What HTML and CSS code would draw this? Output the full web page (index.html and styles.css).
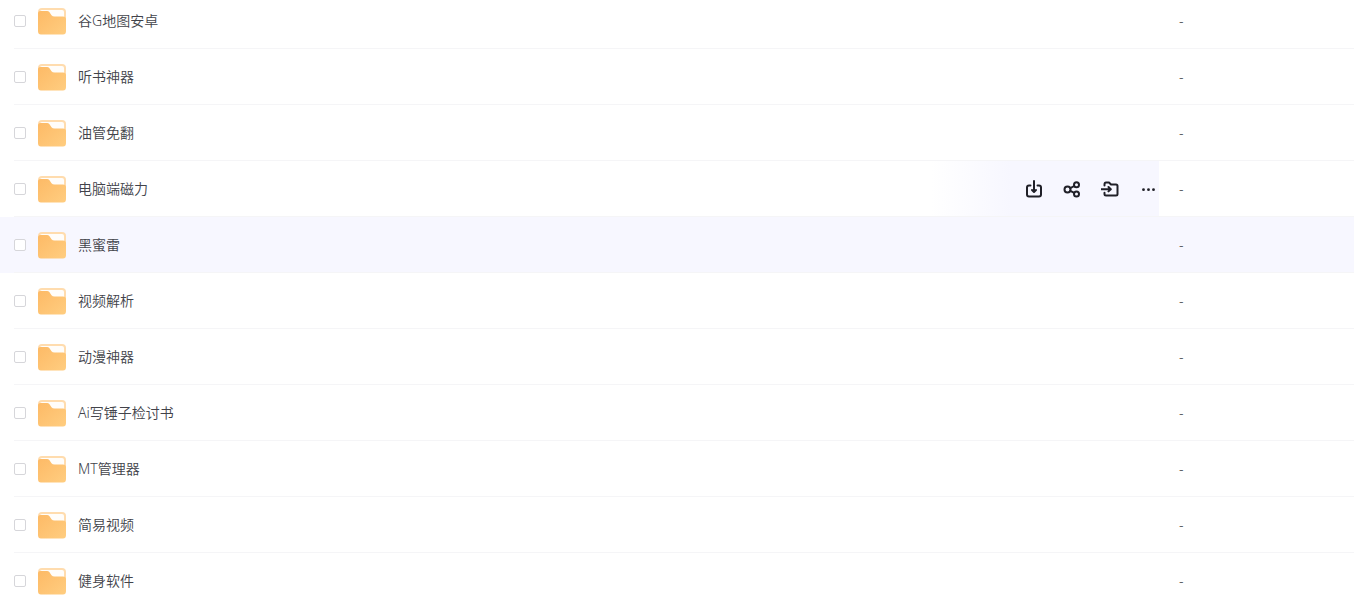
FILE: index.html
```
<!DOCTYPE html>
<html lang="zh-CN">
  <head>
    <meta charset="UTF-8" />
    <meta name="viewport" content="width=device-width, initial-scale=1.0" />
    <title>文件列表</title>
    <link rel="stylesheet" href="styles.css">
  </head>
  <body>
    <table class="file-list">
      <tbody id="fileRows"></tbody>
    </table>

    <svg class="symbols" aria-hidden="true">
      <defs>
        <linearGradient id="folderFront" x1="0" y1="0" x2="1" y2="1">
          <stop offset="0" stop-color="#fdba66" />
          <stop offset="1" stop-color="#ffcd80" />
        </linearGradient>
      </defs>
      <symbol id="folder" viewBox="0 0 30 28">
        <rect x="1" y="1" width="28" height="25" rx="4" fill="#ffdcae" />
        <rect x="3" y="3" width="24" height="14" rx="2" fill="#fffdfa" />
        <path d="M1 6.5Q1 4 3.5 4H10Q11.500 4 12.500 5.200L14.500 8.200Q15.500 9.500 17.500 9.500H26Q29 9.500 29 12V24Q29 27.500 26 27.500H4Q1 27.500 1 24Z" fill="url(#folderFront)" />
      </symbol>
    </svg>

    <template id="actions">
      <div class="actions">
        <button type="button" aria-label="下载">
          <svg viewBox="0 0 18 18">
            <path d="M5.500 5.500H4Q2 5.500 2 7.500V14.500Q2 16.500 4 16.500H14Q16 16.500 16 14.500V7.500Q16 5.500 14 5.500H12.500" />
            <path d="M9 1V11.500M7 10L9 12L11 10" />
          </svg>
        </button>
        <button type="button" aria-label="分享">
          <svg viewBox="0 0 18 18">
            <circle cx="4.500" cy="9.500" r="3" />
            <circle cx="13.500" cy="4.800" r="2.500" />
            <circle cx="13.500" cy="14" r="2.500" />
            <path d="M7.300 8.200L11.200 6M7.300 10.800L11.200 12.800" />
          </svg>
        </button>
        <button type="button" aria-label="移动">
          <svg viewBox="0 0 18 18">
            <path d="M3.500 5.500V4.500Q3.500 2.500 5 2.500H8L10 4.500H15Q16.500 4.500 16.500 6V14Q16.500 15.500 15 15.500H5Q3.500 15.500 3.500 14V12.800" />
            <path d="M0 9.200H9.500M7.500 7L9.800 9.200L7.500 11.400" />
          </svg>
        </button>
        <button type="button" aria-label="更多">
          <svg class="dots" viewBox="0 0 18 18">
            <circle cx="4.500" cy="9.700" r="1.400" />
            <circle cx="9.500" cy="9.700" r="1.400" />
            <circle cx="14.500" cy="9.700" r="1.400" />
          </svg>
        </button>
      </div>
    </template>

    <script>
      const files = [
        { name: "谷G地图安卓" },
        { name: "听书神器" },
        { name: "油管免翻" },
        { name: "电脑端磁力", actions: true },
        { name: "黑蜜雷", active: true },
        { name: "视频解析" },
        { name: "动漫神器" },
        { name: "Ai写锤子检讨书" },
        { name: "MT管理器" },
        { name: "简易视频" },
        { name: "健身软件" },
      ];

      const rows = document.getElementById("fileRows");
      files.forEach((file, index) => {
        const tr = document.createElement("tr");
        if (file.active) {
          tr.className = "active";
        }
        tr.innerHTML = `
          <td class="name-cell">
            <div class="cell">
              <input type="checkbox" id="file${index}" />
              <svg class="folder"><use href="#folder" /></svg>
              <label for="file${index}">${file.name}</label>
            </div>
          </td>
          <td class="size-cell"><div class="cell">-</div></td>`;
        if (file.actions) {
          const actions = document.getElementById("actions").content.cloneNode(true);
          tr.querySelector(".cell").appendChild(actions);
        }
        rows.appendChild(tr);
      });
    </script>
  </body>
</html>
```
FILE: styles.css
```
body {
  margin: 0;
  overflow: hidden;
  background: #fff;
  color: #42434a;
  font-family: "Noto Sans", "Noto Sans CJK SC", sans-serif;
  font-size: 14px;
  font-weight: 350;
  line-height: 20px;
}
.symbols {
  display: block;
  width: 0;
  height: 0;
}
/* the list is scrolled a little past its first row */
.file-list {
  width: 100%;
  margin-top: -7px;
  border-collapse: collapse;
  table-layout: fixed;
}
.file-list td {
  padding: 0;
}
.file-list .name-cell {
  padding-left: 14px;
}
.size-cell {
  width: 195px;
}
.cell {
  display: flex;
  align-items: center;
  height: 55px;
  border-bottom: 1px solid #f5f5f7;
}
.size-cell .cell {
  padding-left: 20px;
}
.active {
  background: #f7f7ff;
}
input[type="checkbox"] {
  appearance: none;
  box-sizing: border-box;
  width: 12px;
  height: 12px;
  margin: 0;
  border: 1px solid #d6d6da;
  border-radius: 2px;
  background: #fff;
}
.folder {
  width: 30px;
  height: 28px;
  margin: 0 11px;
}
.actions {
  display: flex;
  align-items: center;
  align-self: stretch;
  gap: 20px;
  margin-left: auto;
  padding: 0 2px 0 94px;
  background: linear-gradient(to right, #fff, #f7f7ff 80px);
}
.actions button {
  width: 18px;
  height: 18px;
  padding: 0;
  border: none;
  background: none;
  cursor: pointer;
}
.actions svg {
  display: block;
  width: 18px;
  height: 18px;
  fill: none;
  stroke: #202028;
  stroke-width: 2;
  stroke-linecap: round;
  stroke-linejoin: round;
}
.actions .dots {
  fill: #202028;
  stroke: none;
}
```
